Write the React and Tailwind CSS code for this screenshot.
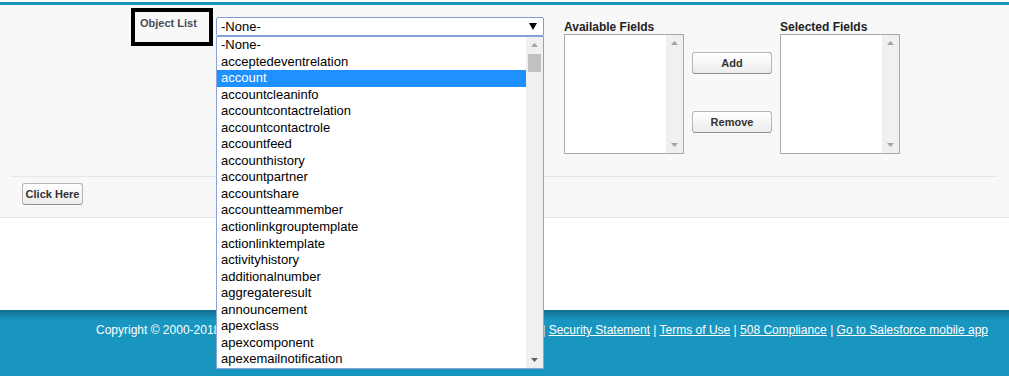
import React from 'react';

const objects = [
  '-None-',
  'acceptedeventrelation',
  'account',
  'accountcleaninfo',
  'accountcontactrelation',
  'accountcontactrole',
  'accountfeed',
  'accounthistory',
  'accountpartner',
  'accountshare',
  'accountteammember',
  'actionlinkgrouptemplate',
  'actionlinktemplate',
  'activityhistory',
  'additionalnumber',
  'aggregateresult',
  'announcement',
  'apexclass',
  'apexcomponent',
  'apexemailnotification',
];

function Arrow({ up, color = '#a3a3a3', w = 7, h = 4 }) {
  return (
    <svg width={w} height={h} viewBox={`0 0 ${w} ${h}`} className="block">
      {up
        ? <polygon points={`0,${h} ${w / 2},0 ${w},${h}`} fill={color} />
        : <polygon points={`0,0 ${w},0 ${w / 2},${h}`} fill={color} />}
    </svg>
  );
}

function Btn({ children, className = '' }) {
  return (
    <button
      className={`h-[22px] rounded-[3px] border border-[#b5b5b5] border-b-[#8f8f8f]
                  bg-[linear-gradient(to_bottom,#ffffff,#ececec)] text-[11px] font-bold
                  text-[#333] leading-none ${className}`}
    >
      {children}
    </button>
  );
}

function FieldBox({ label }) {
  return (
    <div className="flex flex-col">
      <div className="h-[14px] text-[12px] font-bold leading-[14px] text-[#222]">{label}</div>
      <div className="w-[120px] h-[120px] border border-[#a9a9a9] bg-white flex justify-end">
        {/* scrollbar */}
        <div className="w-[17px] h-full bg-[#f0f0f0] flex flex-col items-center justify-between py-[6px]">
          <Arrow up />
          <Arrow />
        </div>
      </div>
    </div>
  );
}

function ObjectSelect() {
  return (
    <div className="relative w-[328px] ml-[3px] mt-[12px]">
      <div className="h-[19px] border border-[#7b9ed6] rounded-[2px] bg-white flex items-center justify-between pl-[4px] pr-[6px]">
        <span className="text-[13px] leading-none text-black">-None-</span>
        <Arrow color="#000" w={8} h={7} />
      </div>

      {/* open options list */}
      <div className="absolute left-0 top-[19px] w-[328px] h-[333px] border border-[#8aa4d6] bg-white flex z-10">
        <div className="flex-1 flex flex-col">
          {objects.map((o) => (
            <div
              key={o}
              className={`h-[16.55px] pl-[4px] text-[13px] leading-[16.55px]
                          ${o === 'account' ? 'bg-[#1e90ff] text-white' : 'text-black'}`}
            >
              {o}
            </div>
          ))}
        </div>
        <div className="w-[17px] h-full bg-[#f0f0f0] flex flex-col items-center">
          <div className="mt-[6px]"><Arrow up /></div>
          <div className="w-[13px] h-[18px] mt-[7px] bg-[#c1c1c1]" />
          <div className="mt-auto mb-[6px]"><Arrow color="#606060" /></div>
        </div>
      </div>
    </div>
  );
}

export default function App() {
  return (
    <div className="w-[1009px] h-[376px] bg-white overflow-hidden font-['Liberation_Sans',Arial,sans-serif]">
      <div className="h-[2px] bg-white" />
      <div className="h-[3px] bg-[#1797c0]" />

      {/* form area */}
      <div className="h-[213px] bg-[#f8f8f8] border-b border-[#e3e3e3] flex flex-col">
        <div className="h-[171px] flex items-start">
          <div className="ml-[131px] mt-[3px] w-[82px] h-[38px] border-4 border-black pl-[5px] pt-[5px]">
            <div className="text-[11px] font-bold leading-[13px] text-[#4a4a56]">Object List</div>
          </div>

          <ObjectSelect />

          <div className="ml-[20px] mt-[15px]">
            <FieldBox label="Available Fields" />
          </div>

          <div className="ml-[8px] mt-[47px] flex flex-col gap-[37px]">
            <Btn className="w-[80px]">Add</Btn>
            <Btn className="w-[80px]">Remove</Btn>
          </div>

          <div className="ml-[8px] mt-[15px]">
            <FieldBox label="Selected Fields" />
          </div>
        </div>

        <div className="mx-[11px] border-t border-[#e6e6e6]" />
        <div className="flex pl-[22px] pt-[6px]">
          <Btn className="w-[61px]">Click Here</Btn>
        </div>
      </div>

      <div className="h-[92px]" />

      {/* footer */}
      <footer className="h-[66px] bg-[linear-gradient(to_bottom,#136e8c_0px,#1996bf_10px)] pl-[96px] pt-[13px] text-[12px] leading-[14px] text-white whitespace-nowrap">
        Copyright © 2000-2018 salesforce.com, inc. All rights reserved. | <a className="underline">Privacy Statement</a> |{' '}
        <a className="underline">Security Statement</a> | <a className="underline">Terms of Use</a> |{' '}
        <a className="underline">508 Compliance</a> | <a className="underline">Go to Salesforce mobile app</a>
      </footer>
    </div>
  );
}
